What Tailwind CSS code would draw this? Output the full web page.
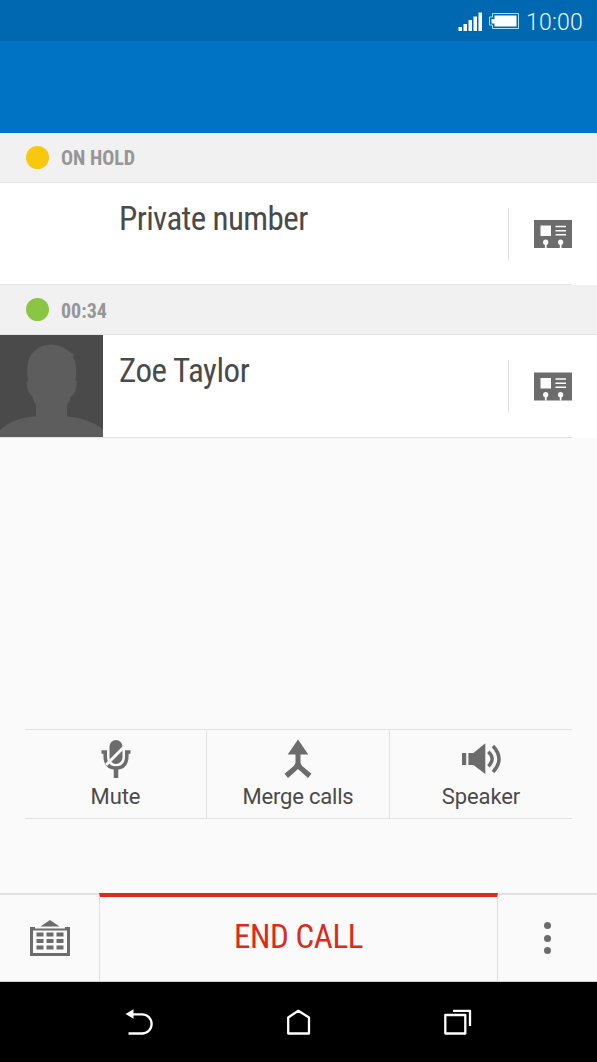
<!DOCTYPE html>
<html lang="en">
<head>
<meta charset="utf-8">
<title>Call</title>
<script src="https://cdn.jsdelivr.net/npm/@tailwindcss/browser@4"></script>
</head>
<body class="w-[597px] h-[1062px] overflow-hidden bg-[#fafafa] font-['Roboto',sans-serif] text-[#4a4a4a] flex flex-col">
  <header class="h-[133px] shrink-0 bg-[#0073c5] flex flex-col">
    <div class="h-[41px] bg-[#0067b1] flex items-center justify-end pr-[13px]">
      <svg class="w-[62px] h-[41px] mr-[6px]" viewBox="458 0 62 41">
        <path fill="#fff" d="M458.500 27h3.500v4h-3.500zM463.500 24h3.500v7h-3.500zM468.500 20h3.500v11h-3.500zM473.500 16.500h3.500v14.500h-3.500zM478.500 12.500h3.500v18.500h-3.500z"/>
        <path fill="none" stroke="#a9e4fa" d="M492.500 13.500h26v15h-26v-3.500h-3v-8h3z"/>
        <path fill="#fff" d="M494.500 15.500h22v11h-22v-3h-3v-4.500h3z"/>
      </svg>
      <span class="text-[23px] font-[350] leading-none text-[#e8f6ff] w-[58px] whitespace-nowrap pt-[3px] tracking-[0.200px]">10:00</span>
    </div>
  </header>

  <div class="h-[50px] shrink-0 bg-[#f1f1f1] border-b border-[#e6e6e6] flex items-center pl-[26px]">
    <span class="size-[23px] rounded-full bg-[#f7c80e]"></span>
    <span class="ml-[12px] pt-px text-[20px] font-bold leading-none text-[#969696] [font-stretch:75%] font-['Roboto_Condensed','Roboto']">ON HOLD</span>
  </div>
  <div class="h-[101px] shrink-0 bg-white flex">
    <div class="w-[103px]"></div>
    <div class="flex-1 pl-[16px] pt-[20px] text-[33px] leading-[32px] tracking-[-0.600px] [font-stretch:75%] font-['Roboto_Condensed','Roboto']">Private number</div>
    <div class="w-[89px] h-[53px] mt-[25px] border-l border-[#e2e2e2] flex pl-[25px] pt-[12px]">
      <svg class="w-[38px] h-[28px]" viewBox="0 0 38 28"><path fill="#6c6c6c" d="M0 0h38v28H0z"/><g fill="#fff"><path d="M6.500 5.500h10.500v10.500h-10.500zM21.500 5.700h10.500v1.500H21.500zM21.500 9.900h10.500v1.500H21.500zM21.500 14.100h10.500v1.500H21.500zM10.900 22h1.700v6H10.900zM25.800 22h1.700v6H25.800z"/><circle cx="11.700" cy="22.200" r="2.600"/><circle cx="26.600" cy="22.200" r="2.600"/></g></svg>
    </div>
  </div>
  <div class="h-px shrink-0 bg-white"><div class="w-[572px] h-px bg-[#e4e4e4]"></div></div>

  <div class="h-[50px] shrink-0 bg-[#f1f1f1] border-b border-[#e2e2e2] flex items-center pl-[26px]">
    <span class="size-[23px] rounded-full bg-[#8ac543]"></span>
    <span class="ml-[12px] pt-[2px] text-[20px] font-bold leading-none text-[#969696] [font-stretch:75%] font-['Roboto_Condensed','Roboto']">00:34</span>
  </div>
  <div class="h-[102px] shrink-0 bg-white flex">
    <svg class="w-[103px] h-[102px] shrink-0" viewBox="0 0 103 102"><path fill="#4a4a4a" d="M0 0h103v102H0z"/><path fill="#5d5d5d" d="M0 102V95Q14 82 36 81.500V70Q33 66 32.500 61Q28 60 26.500 47L28.500 46Q26.500 39 27.500 30Q29 18 39 12.500Q48 7.500 58 10.500Q64 12 70 17L75 20L72.500 21Q78 29 75.500 46H77Q76 60 71 61Q70 66 67 70V81.500Q88 83 103 94V102Z"/></svg>
    <div class="flex-1 pl-[16px] pt-[20px] text-[33px] leading-[32px] tracking-[-0.450px] [font-stretch:75%] font-['Roboto_Condensed','Roboto']">Zoe Taylor</div>
    <div class="w-[89px] h-[53px] mt-[25px] border-l border-[#e2e2e2] flex pl-[25px] pt-[12px]">
      <svg class="w-[38px] h-[29px]" viewBox="0 -0.5 38 29"><path fill="#6c6c6c" d="M0 0h38v28H0z"/><g fill="#fff"><path d="M6.500 5.500h10.500v10.500h-10.500zM21.500 5.700h10.500v1.500H21.500zM21.500 9.900h10.500v1.500H21.500zM21.500 14.100h10.500v1.500H21.500zM10.900 22h1.700v6H10.900zM25.800 22h1.700v6H25.800z"/><circle cx="11.700" cy="22.200" r="2.600"/><circle cx="26.600" cy="22.200" r="2.600"/></g></svg>
    </div>
  </div>
  <div class="h-px shrink-0 bg-white"><div class="w-[572px] h-px bg-[#e2e2e2]"></div></div>

  <main class="flex-1"></main>

  <div class="h-[90px] w-[547px] ml-[25px] mb-[74px] shrink-0 border-y border-[#e2e2e2] flex text-[22px] leading-[26px] text-center">
    <div class="w-[182px] border-r border-[#e2e2e2] flex flex-col items-center">
      <svg class="w-[30px] h-[39px] mt-[9px]" viewBox="0 0 30 39"><rect x="8.500" y="1" width="13" height="24" rx="6.500" fill="#6c6c6c"/><path d="M0.500 13H4.200V17Q4.200 29 15 29Q25.800 29 25.800 17V13H29.500" fill="none" stroke="#6c6c6c" stroke-width="3.600"/><path d="M15 29V39" stroke="#6c6c6c" stroke-width="4.500"/><path d="M5 26L23 8" stroke="#fafafa" stroke-width="3"/></svg>
      <span class="mt-[6px] tracking-[-0.100px]">Mute</span>
    </div>
    <div class="w-[183px] border-r border-[#e2e2e2] flex flex-col items-center">
      <svg class="w-[28px] h-[39px] mt-[9px]" viewBox="0 0 28 39"><path fill="#6c6c6c" d="M14 0.500L24.300 15.500H3.700ZM11.500 15H16.500V23Q16.500 25.500 18.500 27.200L27.500 34.800L24 39L14 30L4 39L0.500 34.800L9.500 27.200Q11.500 25.500 11.500 23Z"/></svg>
      <span class="mt-[6px] tracking-[-0.200px]">Merge calls</span>
    </div>
    <div class="flex-1 flex flex-col items-center">
      <svg class="w-[39px] h-[39px] mt-[9px]" viewBox="0 0 39 39"><path fill="#6c6c6c" d="M0 14h4.200v12H0zM6.400 14h5L23.300 4.300V35L11.400 26H6.400z"/><path d="M26.300 12.800Q34 20 26.300 27.200M31 7Q43 20 31 33" fill="none" stroke="#6c6c6c" stroke-width="3.400"/></svg>
      <span class="mt-[6px] tracking-[-0.100px]">Speaker</span>
    </div>
  </div>

  <div class="h-[89px] shrink-0 flex border-b border-[#cfcfcf]">
    <div class="w-[99px] border-t-2 border-[#e2e2e2] flex pl-[30px] pt-[25px]">
      <svg class="w-[40px] h-[36px]" viewBox="0 0 40 36"><path fill="#6c6c6c" d="M20 0L29.500 6.500H10.500ZM0 7H5V8.500H35V7H40V36H0ZM3 10.500V33H37V10.500Z" fill-rule="evenodd"/><path fill="#6c6c6c" d="M6.500 12.500h7v4h-7zM16.500 12.500h7v4h-7zM26.500 12.500h7v4h-7zM6.500 19h7v4h-7zM16.500 19h7v4h-7zM26.500 19h7v4h-7zM6.500 25.500h7v4h-7zM16.500 25.500h7v4h-7zM26.500 25.500h7v4h-7z"/></svg>
    </div>
    <div class="w-[399px] border-t-4 border-t-[#df2a18] border-x border-x-[#e0e0e0] flex justify-center pt-[24px] text-[33px] leading-[32px] tracking-[-0.400px] text-[#dd2b1b] [font-stretch:75%] font-['Roboto_Condensed','Roboto']"><span>END CALL</span></div>
    <div class="flex-1 border-t-2 border-[#e2e2e2] flex flex-col items-center gap-[5.500px] pt-[27px]">
      <span class="size-[7px] rounded-full bg-[#6c6c6c]"></span>
      <span class="size-[7px] rounded-full bg-[#6c6c6c]"></span>
      <span class="size-[7px] rounded-full bg-[#6c6c6c]"></span>
    </div>
  </div>

  <nav class="h-[80px] shrink-0 bg-black">
    <svg class="w-[597px] h-[80px]" viewBox="0 982 597 80" fill="none" stroke="#fff" stroke-width="2.300" stroke-linejoin="round"><path d="M131 1014.300H142A9.600 9.600 0 0 1 142 1033.500H128.500"/><path fill="#fff" stroke="none" d="M125.500 1014L133.500 1009.300V1018.700Z"/><path d="M288.200 1033.500V1017.500L298.300 1010.800L309 1017.500V1033.500Z"/><path d="M445.300 1015H465.300V1033.500H445.300ZM453 1010.800H470V1026"/></svg>
  </nav>
</body>
</html>
